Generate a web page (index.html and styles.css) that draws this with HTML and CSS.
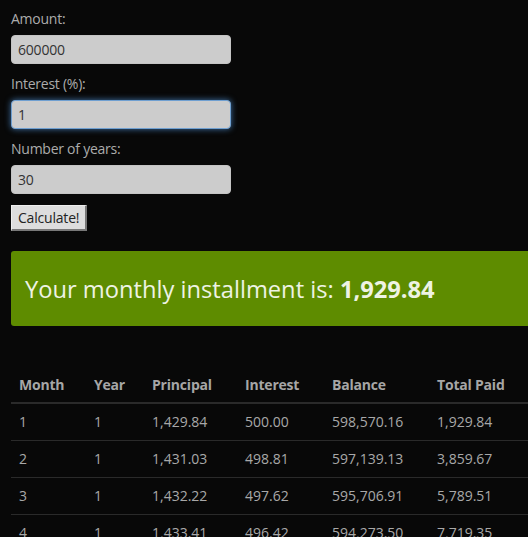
FILE: index.html
```html
<!DOCTYPE html>
<html>
<head>
<meta charset="utf-8">
<link rel="stylesheet" href="styles.css">
</head>
<body>
<div class="page">
  <form class="calc">
    <label class="lbl">Amount:</label>
    <input class="field" type="text" value="600000">
    <label class="lbl">Interest (%):</label>
    <input class="field focused" type="text" value="1">
    <label class="lbl">Number of years:</label>
    <input class="field" type="text" value="30">
    <button class="btn" type="button">Calculate!</button>
  </form>
  <div class="result">Your monthly installment is:&nbsp;<strong>1,929.84</strong></div>
  <table class="sched">
    <thead>
      <tr><th class="c1">Month</th><th class="c2">Year</th><th class="c3">Principal</th><th class="c4">Interest</th><th class="c5">Balance</th><th class="c6">Total Paid</th></tr>
    </thead>
    <tbody>
      <tr><td>1</td><td>1</td><td>1,429.84</td><td>500.00</td><td>598,570.16</td><td>1,929.84</td></tr>
      <tr><td>2</td><td>1</td><td>1,431.03</td><td>498.81</td><td>597,139.13</td><td>3,859.67</td></tr>
      <tr><td>3</td><td>1</td><td>1,432.22</td><td>497.62</td><td>595,706.91</td><td>5,789.51</td></tr>
      <tr><td>4</td><td>1</td><td>1,433.41</td><td>496.42</td><td>594,273.50</td><td>7,719.35</td></tr>
    </tbody>
  </table>
</div>
</body>
</html>
```
FILE: styles.css
```css
html, body {
  margin: 0;
  padding: 0;
  background: #080808;
  overflow: hidden;
}
body {
  font-family: "Open Sans", "Noto Sans", sans-serif;
  font-size: 14px;
  color: #aaaaaa;
}
.page {
  padding: 8px 0 0 11px;
  width: 600px;
}
.calc {
  display: flex;
  flex-direction: column;
  align-items: flex-start;
  margin: 0;
}
.lbl {
  display: block;
  line-height: 21px;
  margin: 9px 0 6px;
  color: #acacac;
  letter-spacing: -0.25px;
}
.lbl:first-child {
  margin-top: 0;
}
.field {
  box-sizing: border-box;
  width: 220px;
  height: 29px;
  margin: 0;
  padding: 0 6px;
  border: 1px solid #c4c4c4;
  border-radius: 4px;
  background: #cccccc;
  color: #333333;
  font-family: "Open Sans", "Noto Sans", sans-serif;
  font-size: 14px;
  letter-spacing: -0.2px;
  outline: none;
}
.field.focused {
  border-color: #6f9fd0;
  box-shadow: 0 0 6px rgba(82, 150, 220, 0.75);
}
.btn {
  margin-top: 11px;
  box-sizing: border-box;
  height: 26px;
  padding: 0 6px;
  background: #dddddd;
  color: #222222;
  border-style: solid;
  border-color: #eeeeee #777777 #777777 #eeeeee;
  border-width: 1px 2px 2px 1px;
  font-family: "Open Sans", "Noto Sans", sans-serif;
  font-size: 14px;
  letter-spacing: -0.2px;
}
.result {
  margin-top: 20px;
  height: 75px;
  display: flex;
  align-items: center;
  padding: 0 14px;
  background: #5e8c00;
  border-radius: 3px;
  color: #eef3e4;
  font-size: 23.7px;
  white-space: nowrap;
}
.result strong {
  font-weight: 700;
}
.sched {
  margin-top: 40px;
  border-collapse: collapse;
  width: 600px;
  color: #a8a8a8;
}
.sched th, .sched td {
  text-align: left;
  height: 37px;
  padding: 0 8px;
  box-sizing: border-box;
  white-space: nowrap;
}
.sched th {
  font-weight: 700;
  color: #a6a6a6;
  border-bottom: 2px solid #2a2a2a;
  letter-spacing: -0.2px;
}
.sched td {
  border-bottom: 1px solid #2a2a2a;
}
.c1 { width: 75px; }
.c2 { width: 58px; }
.c3 { width: 93px; }
.c4 { width: 87px; }
.c5 { width: 105px; }
```
